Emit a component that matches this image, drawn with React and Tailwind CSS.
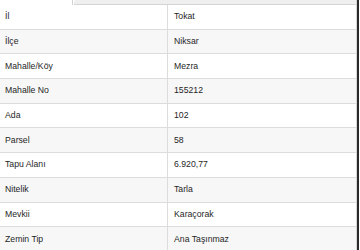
import React from "react";

const rows = [
  ["İl", "Tokat"],
  ["İlçe", "Niksar"],
  ["Mahalle/Köy", "Mezra"],
  ["Mahalle No", "155212"],
  ["Ada", "102"],
  ["Parsel", "58"],
  ["Tapu Alanı", "6.920,77"],
  ["Nitelik", "Tarla"],
  ["Mevkii", "Karaçorak"],
  ["Zemin Tip", "Ana Taşınmaz"],
];

export default function App() {
  return (
    <div
      className="w-[360px] h-[250px] overflow-hidden bg-white flex text-[#1f1f1f]"
      style={{ fontFamily: '"Liberation Sans", Arial, sans-serif' }}
    >
      <div className="w-[357px] flex flex-col border-r border-[#d6d6d6]">
        <div className="h-[5px] flex shrink-0">
          <div className="w-[73px] bg-white border-r border-[#d4d4d4]" />
          <div className="flex-1 ml-[1px] bg-[#efefef] rounded-tl-[2px] border-b border-[#d4d4d4]" />
        </div>
        {rows.map(([k, v], i) => (
          <div
            key={k}
            className={`flex h-[24.7px] shrink-0 border-b border-[#dcdcdc] text-[8.7px] ${
              i % 2 === 1 ? "bg-[#f7f7f7]" : "bg-white"
            }`}
          >
            <div className="w-[168px] border-r border-[#dcdcdc] pl-[5px] flex items-center">
              {k}
            </div>
            <div className="flex-1 pl-[6px] flex items-center">{v}</div>
          </div>
        ))}
      </div>
      <div className="w-[2px] bg-[#2a2a2a]" />
      <div className="flex-1 bg-white" />
    </div>
  );
}
